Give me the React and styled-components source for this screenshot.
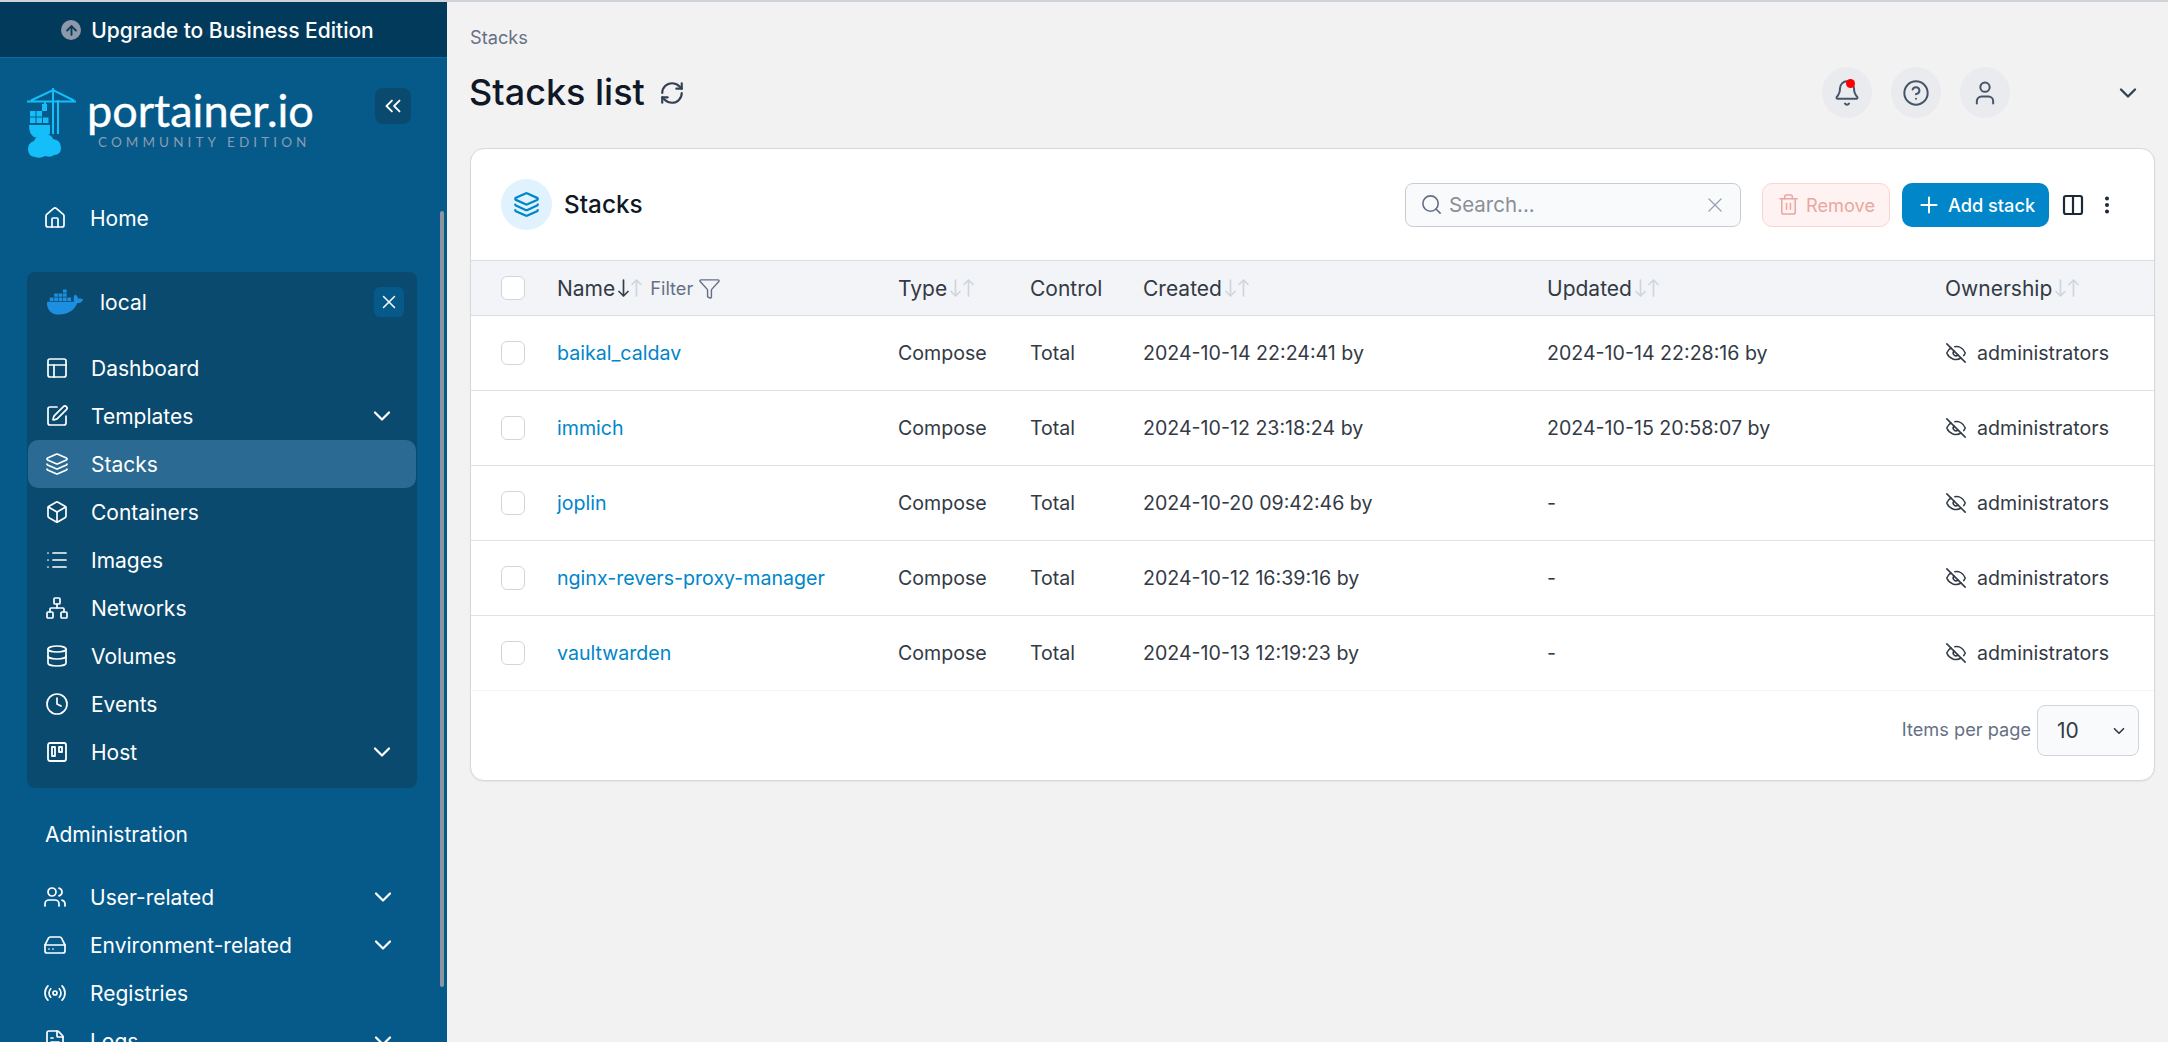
import React from 'react';
import styled, { createGlobalStyle } from 'styled-components';
import {
  Home, PanelsTopLeft, SquarePen, Layers, Box, List, Network, Database, Clock, Users, HardDrive, Radio, FileText,
  ChevronDown, ChevronsLeft, X, RefreshCw, Bell, CircleHelp, User, Search, Trash2, Plus, Columns2, EllipsisVertical,
  Funnel, ArrowUp, EyeOff,
} from 'lucide-react';
import { FaDocker } from 'react-icons/fa';

const Global = createGlobalStyle`
  html, body { margin: 0; padding: 0; height: 100%; overflow: hidden; background: #f2f2f3; }
  body { font-family: Inter, "Liberation Sans", sans-serif; font-size: 19.6px; color: #333a45; }
  * { box-sizing: border-box; }
`;

const Page = styled.div`
  display: flex;
  height: 1042px;
  border-top: 2px solid #cdd3d9;
  overflow: hidden;
`;

const Sidebar = styled.aside`
  position: relative;
  flex: 0 0 447px;
  background: #065a8a;
  color: #fff;
  font-size: 21px;
  overflow: hidden;
  display: flex;
  flex-direction: column;
`;

const Upgrade = styled.div`
  flex: 0 0 56px;
  background: #023a5c;
  border-bottom: 1px solid #0a6aa1;
  display: flex;
  align-items: center;
  justify-content: center;
  gap: 10px;
  padding: 1px 12px 0 0;
  font-weight: 500;
`;

const UpgradeIcon = styled.span`
  width: 20px;
  height: 20px;
  border-radius: 50%;
  background: #8d99a8;
  color: #0b3a58;
  display: flex;
  align-items: center;
  justify-content: center;
`;

const Brand = styled.div`
  flex: 0 0 auto;
  display: flex;
  align-items: flex-start;
  padding: 30px 36px 0 27px;
  height: 136px;
`;

const BrandText = styled.div`
  margin-left: 11px;
  display: flex;
  flex-direction: column;
  flex: 1;
`;

const BrandName = styled.div`
  font-family: Lato, sans-serif;
  font-size: 45px;
  line-height: 46px;
  margin-top: -1px;
  font-weight: 400;
  -webkit-text-stroke: 0.4px #fff;
`;

const BrandSub = styled.div`
  font-family: Lato, sans-serif;
  font-size: 13.5px;
  line-height: 14px;
  letter-spacing: 4.1px;
  color: #8a9cb0;
  margin-left: 11px;
  margin-top: 2px;
  white-space: nowrap;
`;

const CollapseBtn = styled.button`
  width: 36px;
  height: 36px;
  padding: 0;
  border: 0;
  border-radius: 8px;
  background: #0b4a6f;
  color: #fff;
  display: flex;
  align-items: center;
  justify-content: center;
`;

const NavRow = styled.div`
  flex: 0 0 48px;
  height: 48px;
  display: flex;
  align-items: center;
  padding: ${p => (p.$inset ? '0 20px 0 20px' : '0 50px 0 46px')};
  margin: ${p => (p.$inset ? '0 1px' : '0')};
  border-radius: 10px;
  background: ${p => (p.$active ? '#2a6a93' : 'transparent')};
  color: #fff;
  white-space: nowrap;
`;

const NavIcon = styled.span`
  flex: 0 0 ${p => (p.$inset ? '43px' : '44px')};
  display: flex;
  align-items: center;
  & > svg { margin-left: -3px; }
`;

const NavLabel = styled.span`
  flex: 1;
`;

const EnvBlock = styled.section`
  flex: 0 0 auto;
  margin: 30px 30px 0 27px;
  height: 516px;
  background: #0b4a6f;
  border-radius: 8px;
  display: flex;
  flex-direction: column;
`;

const EnvHead = styled.div`
  flex: 0 0 72px;
  display: flex;
  align-items: center;
  padding: 0 13px 12px 20px;
`;

const EnvName = styled.span`
  flex: 1;
  margin-left: 17px;
`;

const EnvClose = styled.span`
  width: 30px;
  height: 30px;
  border-radius: 6px;
  background: #065a8a;
  display: flex;
  align-items: center;
  justify-content: center;
`;

const SectionTitle = styled.div`
  flex: 0 0 auto;
  margin: 36px 0 27px 45px;
  line-height: 22px;
`;

const Scroll = styled.div`
  position: absolute;
  left: 440px;
  top: 209px;
  width: 4px;
  height: 776px;
  border-radius: 2px;
  background: #8b959d;
`;

const Main = styled.main`
  flex: 1;
  min-width: 0;
  padding: 0 13px 0 23px;
`;

const Crumb = styled.div`
  height: 22px;
  margin-top: 24px;
  font-size: 18.2px;
  line-height: 22px;
  color: #667085;
`;

const HeaderRow = styled.header`
  height: 51px;
  margin-top: 19px;
  display: flex;
  align-items: center;
`;

const PageTitle = styled.h1`
  margin: 0 0 2px -1px;
  font-size: 36px;
  font-weight: 500;
  color: #101828;
`;

const TitleRefresh = styled.span`
  margin-left: 14px;
  display: flex;
  color: #344054;
`;

const HeaderSpacer = styled.div`
  flex: 1;
`;

const RoundBtn = styled.span`
  position: relative;
  width: 50px;
  height: 51px;
  margin-right: 19px;
  border-radius: 50%;
  background: #e9ebef;
  color: #475467;
  display: flex;
  align-items: center;
  justify-content: center;
`;

const RedDot = styled.span`
  position: absolute;
  left: 24px;
  top: 12px;
  width: 9px;
  height: 9px;
  border-radius: 50%;
  background: #f00;
`;

const UserChevron = styled.span`
  margin-left: 85px;
  margin-right: 13px;
  display: flex;
  color: #344054;
`;

const Card = styled.section`
  margin-top: 30px;
  height: 633px;
  background: #fff;
  border: 1px solid #d4d8df;
  border-radius: 14px;
  box-shadow: 0 1px 2px rgba(16, 24, 40, 0.06);
  overflow: hidden;
`;

const CardHead = styled.div`
  height: 111px;
  padding: 0 36px 0 30px;
  display: flex;
  align-items: center;
`;

const CardIcon = styled.span`
  width: 51px;
  height: 51px;
  border-radius: 50%;
  background: #e0f2fe;
  color: #0086c9;
  display: flex;
  align-items: center;
  justify-content: center;
`;

const CardTitle = styled.h2`
  margin: 0 0 2px 12px;
  font-size: 24.3px;
  font-weight: 500;
  color: #101828;
  flex: 1;
`;

const SearchBox = styled.div`
  width: 336px;
  height: 44px;
  border: 1px solid #c7ccd4;
  border-radius: 8px;
  background: #f9fafb;
  display: flex;
  align-items: center;
  padding: 0 13px 0 14px;
  color: #667085;
`;

const SearchText = styled.span`
  flex: 1;
  margin-left: 6px;
  color: #8a8f98;
  font-size: 20.5px;
`;

const RemoveBtn = styled.span`
  margin-left: 21px;
  width: 128px;
  height: 44px;
  border: 1px solid #fcd4d0;
  border-radius: 10px;
  background: #fef3f2;
  color: #eaa7a0;
  font-size: 18.2px;
  display: flex;
  align-items: center;
  justify-content: center;
  gap: 6px;
`;

const AddBtn = styled.span`
  margin-left: 12px;
  width: 147px;
  height: 44px;
  border-radius: 10px;
  background: #0086c9;
  color: #fff;
  font-size: 18.2px;
  font-weight: 500;
  display: flex;
  align-items: center;
  justify-content: center;
  gap: 6px;
`;

const ToolIcon = styled.span`
  margin-left: ${p => p.$gap}px;
  display: flex;
  color: #1d2939;
`;

const gridCols = '87px 340px 132px 113px 404px 398px 1fr';

const TableHead = styled.div`
  height: 56px;
  display: grid;
  grid-template-columns: ${gridCols};
  align-items: center;
  background: #f2f4f7;
  border-top: 1px solid #d9dce1;
  border-bottom: 1px solid #d9dce1;
  font-size: 21px;
`;

const Row = styled.div`
  height: 75px;
  display: grid;
  grid-template-columns: ${gridCols};
  align-items: center;
  border-bottom: 1px solid ${p => (p.$last ? '#f2f4f7' : '#dfe2e6')};
`;

const CheckCell = styled.div`
  padding-left: 30px;
`;

const Check = styled.span`
  display: block;
  width: 24px;
  height: 24px;
  background: #fff;
  border: 1px solid #d0d5dd;
  border-radius: 6px;
`;

const HeadCell = styled.div`
  display: flex;
  align-items: center;
  margin-left: ${p => p.$shift || 0}px;
`;

const SortArrows = styled.span`
  display: inline-flex;
  margin-left: 3px;
  gap: 2px;
  color: #d0d5dd;
`;

const SortGlyph = styled.svg`
  width: 11px;
  height: 18px;
  color: ${p => (p.$on ? '#344054' : '#d0d5dd')};
`;

const FilterLink = styled.span`
  margin-left: 8px;
  font-size: 18.2px;
  color: #667085;
  display: flex;
  align-items: center;
  gap: 5px;
`;

const NameLink = styled.a`
  margin-left: -1px;
  color: #0086c9;
`;

const Owner = styled.div`
  display: flex;
  align-items: center;
  gap: 10px;
`;

const Footer = styled.div`
  height: 88px;
  padding: 14px 15px 0 0;
  display: flex;
  justify-content: flex-end;
  align-items: flex-start;
`;

const PerPage = styled.span`
  margin-top: 14px;
  font-size: 18.2px;
  line-height: 20px;
  color: #667085;
`;

const PageSelect = styled.div`
  margin-left: 6px;
  width: 102px;
  height: 51px;
  background: #f9fafb;
  border: 1px solid #d0d5dd;
  border-radius: 8px;
  padding: 0 10px 0 19px;
  display: flex;
  align-items: center;
  justify-content: space-between;
  font-size: 21px;
`;

const PortainerMark = () => (
  <svg width="49" height="70" viewBox="0 0 49 70" fill="none" style={{ flex: '0 0 49px' }}>
    <g stroke="#13bef9" strokeWidth="2">
      <path d="M0 13.5H49M4 12.5L26 2 47 12.5" />
      <path d="M26 0V46M31 12V46" />
      <path d="M18 14V21" />
    </g>
    <g fill="#13bef9">
      <rect x="15" y="16" width="5" height="7" />
      <rect x="3" y="23" width="5.5" height="5.5" /><rect x="9.5" y="23" width="5.5" height="5.5" />
      <rect x="3" y="29.5" width="5.5" height="5.5" /><rect x="9.5" y="29.5" width="5.5" height="5.5" /><rect x="16" y="29.5" width="5.5" height="5.5" />
      <path d="M2 37H23V46Q20 48 15 48 8 50 7 49Q2 46 2 37Z" />
      <path d="M8 69Q1 68 1 61 1 55 7 53 10 45 19 46 25 47 26 51 34 52 34 60 34 67 27 67 24 70 18 68 13 71 8 69Z" />
    </g>
  </svg>
);

const HostIcon = ({ size }) => (
  <svg width={size} height={size} viewBox="0 0 24 24" fill="none" stroke="currentColor" strokeWidth="1.8" strokeLinecap="round" strokeLinejoin="round">
    <rect x="3" y="3" width="18" height="18" rx="2" />
    <rect x="7" y="7" width="3" height="9" />
    <rect x="14" y="7" width="3" height="5" />
  </svg>
);

const Nav = ({ icon: I, label, chevron, inset, active }) => (
  <NavRow $inset={inset} $active={active}>
    <NavIcon $inset={inset}><I size={24} strokeWidth={1.7} /></NavIcon>
    <NavLabel>{label}</NavLabel>
    {chevron && <ChevronDown size={28} strokeWidth={1.9} />}
  </NavRow>
);

const SortDownIcon = ({ on }) => (
  <SortGlyph $on={on} viewBox="0 0 11 18" fill="none" stroke="currentColor" strokeWidth="1.7" strokeLinecap="round" strokeLinejoin="round">
    <path d="M5.5 1V17M1 12.5L5.5 17 10 12.5" />
  </SortGlyph>
);

const SortUpIcon = () => (
  <SortGlyph viewBox="0 0 11 18" fill="none" stroke="currentColor" strokeWidth="1.7" strokeLinecap="round" strokeLinejoin="round">
    <path d="M5.5 17V1M1 5.5L5.5 1 10 5.5" />
  </SortGlyph>
);

const Sort = ({ on }) => (
  <SortArrows>
    <SortDownIcon on={on} />
    <SortUpIcon />
  </SortArrows>
);

const stacks = [
  ['baikal_caldav', '2024-10-14 22:24:41 by', '2024-10-14 22:28:16 by'],
  ['immich', '2024-10-12 23:18:24 by', '2024-10-15 20:58:07 by'],
  ['joplin', '2024-10-20 09:42:46 by', '-'],
  ['nginx-revers-proxy-manager', '2024-10-12 16:39:16 by', '-'],
  ['vaultwarden', '2024-10-13 12:19:23 by', '-'],
];

export default function App() {
  return (
    <Page>
      <Global />
      <Sidebar>
        <Upgrade>
          <UpgradeIcon><ArrowUp size={15} strokeWidth={3} /></UpgradeIcon>
          Upgrade to Business Edition
        </Upgrade>
        <Brand>
          <PortainerMark />
          <BrandText>
            <BrandName>portainer.io</BrandName>
            <BrandSub>COMMUNITY EDITION</BrandSub>
          </BrandText>
          <CollapseBtn><ChevronsLeft size={26} strokeWidth={1.7} /></CollapseBtn>
        </Brand>
        <Nav icon={Home} label="Home" />
        <EnvBlock>
          <EnvHead>
            <FaDocker size={36} color="#1d8fe0" />
            <EnvName>local</EnvName>
            <EnvClose><X size={22} strokeWidth={1.6} /></EnvClose>
          </EnvHead>
          <Nav inset icon={PanelsTopLeft} label="Dashboard" />
          <Nav inset icon={SquarePen} label="Templates" chevron />
          <Nav inset active icon={Layers} label="Stacks" />
          <Nav inset icon={Box} label="Containers" />
          <Nav inset icon={List} label="Images" />
          <Nav inset icon={Network} label="Networks" />
          <Nav inset icon={Database} label="Volumes" />
          <Nav inset icon={Clock} label="Events" />
          <Nav inset icon={HostIcon} label="Host" chevron />
        </EnvBlock>
        <SectionTitle>Administration</SectionTitle>
        <Nav icon={Users} label="User-related" chevron />
        <Nav icon={HardDrive} label="Environment-related" chevron />
        <Nav icon={Radio} label="Registries" />
        <Nav icon={FileText} label="Logs" chevron />
        <Scroll />
      </Sidebar>
      <Main>
        <Crumb>Stacks</Crumb>
        <HeaderRow>
          <PageTitle>Stacks list</PageTitle>
          <TitleRefresh><RefreshCw size={26} strokeWidth={2} /></TitleRefresh>
          <HeaderSpacer />
          <RoundBtn><Bell size={28} strokeWidth={1.7} /><RedDot /></RoundBtn>
          <RoundBtn><CircleHelp size={28} strokeWidth={1.7} /></RoundBtn>
          <RoundBtn><User size={28} strokeWidth={1.7} /></RoundBtn>
          <UserChevron><ChevronDown size={28} strokeWidth={2} /></UserChevron>
        </HeaderRow>
        <Card>
          <CardHead>
            <CardIcon><Layers size={27} strokeWidth={2} /></CardIcon>
            <CardTitle>Stacks</CardTitle>
            <SearchBox>
              <Search size={23} strokeWidth={1.7} />
              <SearchText>Search...</SearchText>
              <X size={24} strokeWidth={1.3} color="#98a2b3" />
            </SearchBox>
            <RemoveBtn><Trash2 size={23} strokeWidth={1.6} />Remove</RemoveBtn>
            <AddBtn><Plus size={26} strokeWidth={1.8} />Add stack</AddBtn>
            <ToolIcon $gap={12}><Columns2 size={24} strokeWidth={2.2} /></ToolIcon>
            <ToolIcon $gap={11}><EllipsisVertical size={22} strokeWidth={2.4} /></ToolIcon>
          </CardHead>
          <TableHead>
            <CheckCell><Check /></CheckCell>
            <HeadCell $shift={-1}>Name<Sort on /><FilterLink>Filter <Funnel size={23} strokeWidth={1.5} /></FilterLink></HeadCell>
            <HeadCell>Type<Sort /></HeadCell>
            <HeadCell>Control</HeadCell>
            <HeadCell>Created<Sort /></HeadCell>
            <HeadCell>Updated<Sort /></HeadCell>
            <HeadCell>Ownership<Sort /></HeadCell>
          </TableHead>
          {stacks.map(([name, created, updated], i) => (
            <Row key={name} $last={i === stacks.length - 1}>
              <CheckCell><Check /></CheckCell>
              <NameLink>{name}</NameLink>
              <div>Compose</div>
              <div>Total</div>
              <div>{created}</div>
              <div>{updated}</div>
              <Owner><EyeOff size={22} strokeWidth={1.7} />administrators</Owner>
            </Row>
          ))}
          <Footer>
            <PerPage>Items per page</PerPage>
            <PageSelect>10<ChevronDown size={18} strokeWidth={2.2} /></PageSelect>
          </Footer>
        </Card>
      </Main>
    </Page>
  );
}
